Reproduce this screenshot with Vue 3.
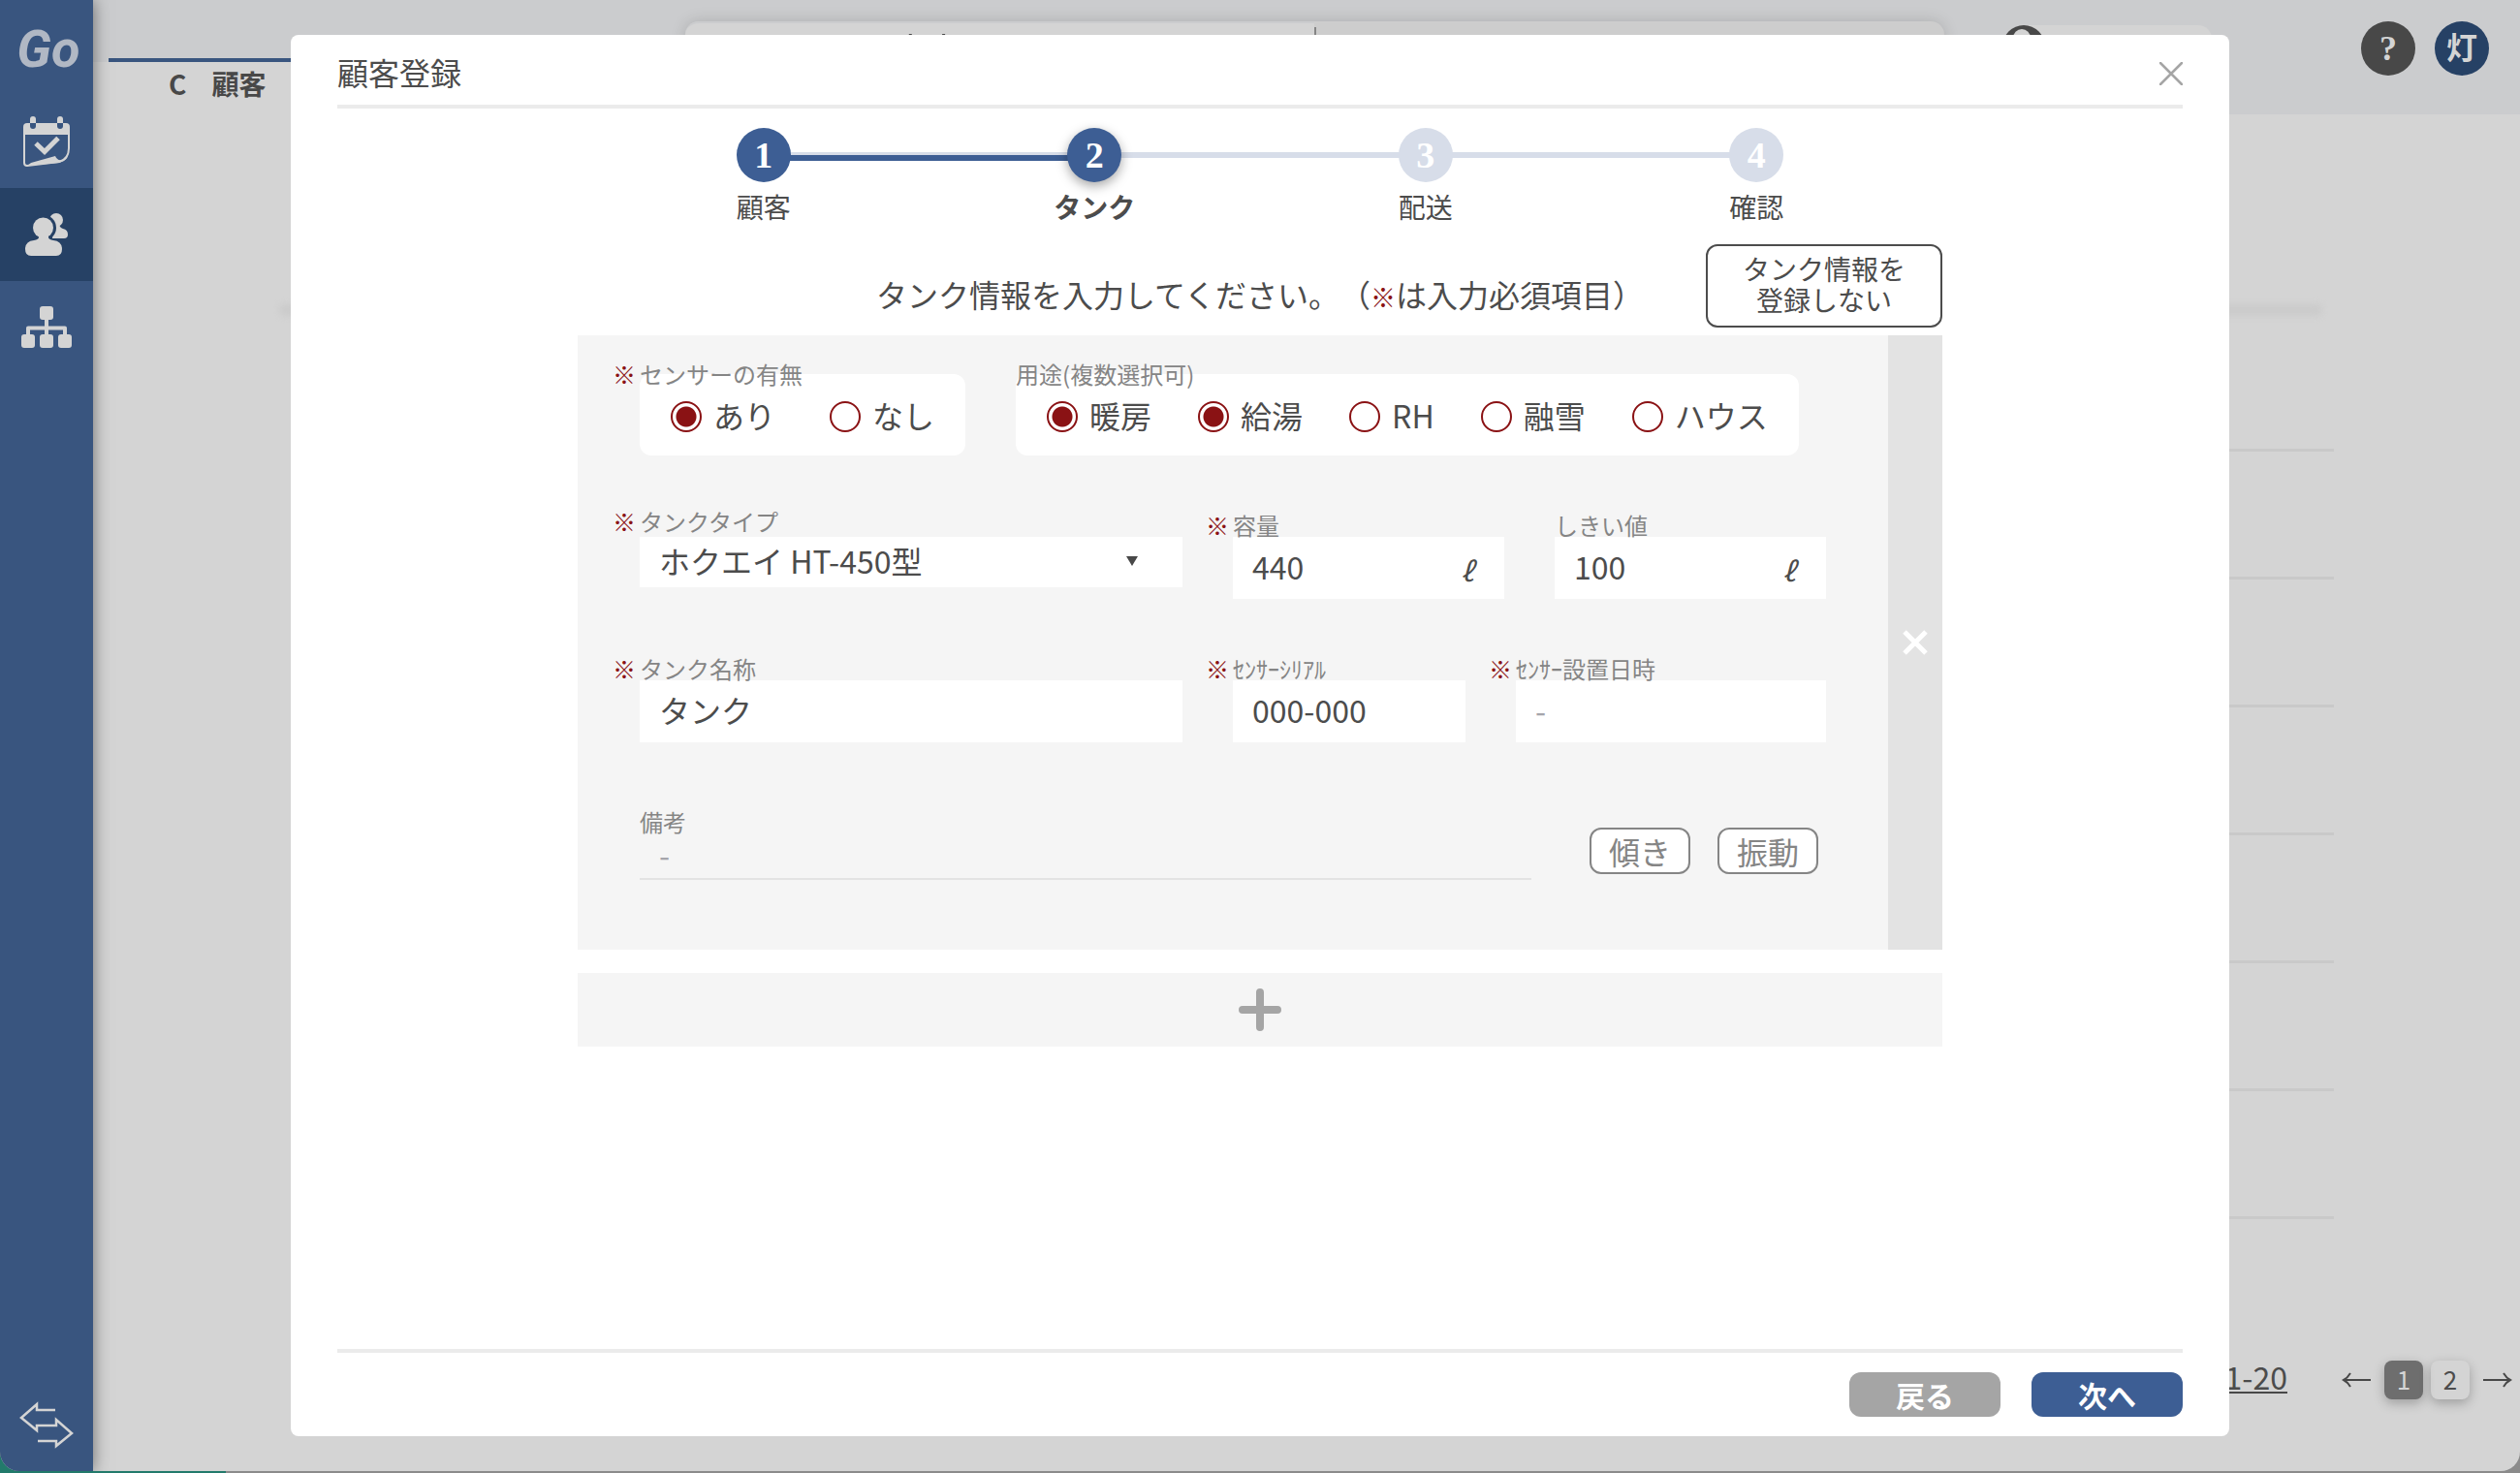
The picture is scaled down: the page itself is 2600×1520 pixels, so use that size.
<script setup>
import { ref } from 'vue'

const steps = [
  { label: '顧客', state: 'done' },
  { label: 'タンク', state: 'current' },
  { label: '配送', state: 'todo' },
  { label: '確認', state: 'todo' },
]
const sensor = ref('あり')
const sensorOptions = ['あり', 'なし']
const usage = ref(['暖房', '給湯'])
const usageOptions = ['暖房', '給湯', 'RH', '融雪', 'ハウス']
const tankType = ref('ホクエイ HT-450型')
const capacity = ref('440')
const threshold = ref('100')
const tankName = ref('タンク')
const serial = ref('000-000')
const installedAt = ref('')
const note = ref('')
</script>

<template>
  <div class="app">
    <nav class="sidebar">
      <a href="#" class="brand">Go</a>
      <a href="#" class="nav-item" aria-label="予定">
        <svg width="48" height="52" viewBox="0 0 48 52">
          <path d="M4 7H44Q48 7 48 11V19H0V11Q0 7 4 7Z" fill="#d4d4d4" />
          <path d="M1 18V48Q1 51 4 51L37 47Q47 44 47 33V18" fill="none" stroke="#d4d4d4" stroke-width="2" />
          <path d="M4 51L8 48L33 41Q35 46 40 45Q45 43 47 35Q47 46 37 48Z" fill="#d4d4d4" />
          <rect x="7" y="0" width="6" height="13" rx="3" fill="#39557f" />
          <rect x="35" y="0" width="6" height="13" rx="3" fill="#39557f" />
          <path d="M7 7V3a3 3 0 0 1 6 0V7ZM35 7V3a3 3 0 0 1 6 0V7Z" fill="#d4d4d4" />
          <path d="M13 28L22 36.500L36 22.500" fill="none" stroke="#d4d4d4" stroke-width="5" />
        </svg>
      </a>
      <a href="#" class="nav-item active" aria-label="顧客">
        <svg width="44" height="44" viewBox="26 220 44 44">
          <g fill="#d4d4d4">
            <circle cx="58" cy="227" r="7" />
            <path d="M55 230H62Q60 234 65 236Q70 237 70 242Q70 246 66 246H54Z" />
          </g>
          <circle cx="44.500" cy="235" r="13.500" fill="#264165" />
          <g fill="#d4d4d4">
            <circle cx="44.500" cy="235" r="10.500" />
            <path d="M40 242H50V245Q50 247 55 248Q64 249 64 257Q64 264 58 264H32Q26 264 26 257Q26 249 35 248Q40 247 40 245Z" />
          </g>
        </svg>
      </a>
      <a href="#" class="nav-item" aria-label="組織">
        <svg width="52" height="44" viewBox="22 316 52 44">
          <path d="M48 328V348M29 348V338.500H67V348" fill="none" stroke="#d4d4d4" stroke-width="4" stroke-linejoin="round" />
          <g fill="#d4d4d4">
            <rect x="41" y="316" width="14" height="14" rx="3" />
            <rect x="22" y="345" width="14" height="14" rx="3" />
            <rect x="41" y="345" width="14" height="14" rx="3" />
            <rect x="60" y="345" width="14" height="14" rx="3" />
          </g>
        </svg>
      </a>
      <a href="#" class="nav-toggle" aria-label="切替">
        <svg width="56" height="50" viewBox="20 1445 56 50">
          <path d="M57 1454H38V1448L22 1462L38 1475V1470H58V1464L74 1478L58 1491V1486H39" fill="none" stroke="#d4d4d4" stroke-width="2.500" />
        </svg>
      </a>
    </nav>

    <main class="page">
      <header class="topbar">
        <h1 class="tab"><span>C</span><span>顧客</span></h1>
        <div class="search">
          <div class="search-main">
            <svg width="240" height="6" viewBox="0 0 240 6">
              <path d="M10 3h3v3h-3zM195 1h3l-2 5h-3zM203 3h3v3h-3zM216 3h3v3h-3zM229 1h3l1 5h-3z" fill="#484848" />
            </svg>
          </div>
          <div class="search-more"></div>
        </div>
        <div class="staff">
          <svg width="44" height="44" viewBox="0 0 44 44">
            <circle cx="22" cy="22" r="22" fill="#484848" />
            <circle cx="20" cy="13" r="9" fill="#d4d4d4" />
          </svg>
        </div>
        <div class="account">
          <button type="button" class="round help">?</button>
          <button type="button" class="round user">灯</button>
        </div>
      </header>
      <section class="list">
        <div class="list-head"></div>
        <div v-for="n in 7" :key="n" class="list-row"></div>
      </section>
      <div class="pager">
        <span class="range">1-20</span>
        <a href="#" aria-label="前へ">
          <svg width="30" height="18" viewBox="0 0 30 18"><path d="M30 9H2M9 2Q6 7 2 9Q6 11 9 16" fill="none" stroke="#484848" stroke-width="2" /></svg>
        </a>
        <button type="button" class="pg on">1</button>
        <button type="button" class="pg">2</button>
        <a href="#" aria-label="次へ">
          <svg width="30" height="18" viewBox="0 0 30 18"><path d="M0 9H28M21 2Q24 7 28 9Q24 11 21 16" fill="none" stroke="#484848" stroke-width="2" /></svg>
        </a>
      </div>
    </main>

    <div class="modal" role="dialog" aria-labelledby="dialog-title">
      <header class="modal-head">
        <h2 id="dialog-title">顧客登録</h2>
        <button type="button" class="close" aria-label="閉じる">
          <svg width="24" height="24" viewBox="0 0 24 24"><path d="M1 1L23 23M23 1L1 23" stroke="#a5a5a5" stroke-width="2.500" stroke-linecap="round" /></svg>
        </button>
      </header>

      <div class="modal-body">
        <ol class="steps">
          <li v-for="(s, i) in steps" :key="s.label" :class="s.state">
            <span class="dot">{{ i + 1 }}</span>
            <span class="step-label">{{ s.label }}</span>
          </li>
        </ol>

        <div class="wizard">
          <div class="intro">
            <p>タンク情報を入力してください。（<span class="mark">※</span>は入力必須項目）</p>
            <button type="button" class="skip">タンク情報を<br />登録しない</button>
          </div>

          <div class="card">
            <form class="form">
              <div class="row row-choice">
                <div role="group" aria-labelledby="sensor-label">
                  <span id="sensor-label" class="label over"><i>※</i>センサーの有無</span>
                  <div class="choices wide">
                    <label v-for="o in sensorOptions" :key="o">
                      <input v-model="sensor" type="radio" name="sensor" :value="o" /><span>{{ o }}</span>
                    </label>
                  </div>
                </div>
                <div role="group" aria-labelledby="usage-label">
                  <span id="usage-label" class="label over">用途(複数選択可)</span>
                  <div class="choices">
                    <label v-for="o in usageOptions" :key="o">
                      <input v-model="usage" type="checkbox" :value="o" /><span>{{ o }}</span>
                    </label>
                  </div>
                </div>
              </div>

              <div class="row row-spec">
                <div>
                  <label class="label raised" for="type"><i>※</i>タンクタイプ</label>
                  <div class="select">
                    <select id="type" v-model="tankType">
                      <option>ホクエイ HT-450型</option>
                    </select>
                    <svg width="12" height="10" viewBox="0 0 12 10"><path d="M0 0H12L6 10Z" fill="#484848" /></svg>
                  </div>
                </div>
                <div>
                  <label class="label lowered" for="capacity"><i>※</i>容量</label>
                  <div class="field"><input id="capacity" v-model="capacity" type="text" /><span>ℓ</span></div>
                </div>
                <div>
                  <label class="label lowered" for="threshold">しきい値</label>
                  <div class="field"><input id="threshold" v-model="threshold" type="text" /><span>ℓ</span></div>
                </div>
              </div>

              <div class="row row-name">
                <div>
                  <label class="label" for="name"><i>※</i>タンク名称</label>
                  <div class="field"><input id="name" v-model="tankName" type="text" /></div>
                </div>
                <div>
                  <label class="label" for="serial"><i>※</i>ｾﾝｻｰｼﾘｱﾙ</label>
                  <div class="field"><input id="serial" v-model="serial" type="text" /></div>
                </div>
                <div>
                  <label class="label" for="installed"><i>※</i>ｾﾝｻｰ設置日時</label>
                  <div class="field"><input id="installed" v-model="installedAt" type="text" placeholder="-" /></div>
                </div>
              </div>

              <div class="row row-note">
                <div class="note">
                  <label class="label" for="note">備考</label>
                  <input id="note" v-model="note" type="text" placeholder="-" />
                </div>
                <div class="toggles">
                  <button type="button">傾き</button>
                  <button type="button">振動</button>
                </div>
              </div>
            </form>
            <button type="button" class="remove" aria-label="削除">
              <svg width="26" height="26" viewBox="0 0 26 26"><path d="M2 2L24 24M24 2L2 24" stroke="#fff" stroke-width="5" /></svg>
            </button>
          </div>

          <button type="button" class="add" aria-label="タンクを追加">
            <svg width="44" height="44" viewBox="0 0 44 44"><path d="M22 4V40M4 22H40" stroke="#a5a5a5" stroke-width="8" stroke-linecap="round" /></svg>
          </button>
        </div>
      </div>

      <footer class="modal-foot">
        <button type="button" class="back">戻る</button>
        <button type="button" class="next">次へ</button>
      </footer>
    </div>
  </div>
</template>

<style>
html {
  background: linear-gradient(to right, #227a6b 233px, #8b8b8b 233px);
  min-height: 100%;
}
</style>

<style scoped>
* {
  box-sizing: border-box;
}
.app {
  position: relative;
  display: flex;
  min-height: calc(100vh - 2px);
  border-radius: 0 0 20px 20px;
  overflow: hidden;
  background: #d4d4d4;
  color: #4c4c4c;
  font-family: "Noto Sans CJK JP", sans-serif;
  font-size: 32px;
}
a {
  color: inherit;
  text-decoration: none;
}
button,
input,
select {
  margin: 0;
  padding: 0;
  border: 0;
  color: inherit;
  font: inherit;
}
button {
  display: flex;
  align-items: center;
  justify-content: center;
  background: none;
}
svg {
  display: block;
}

.sidebar {
  display: flex;
  flex-direction: column;
  flex: none;
  width: 96px;
  background: #39557f;
  box-shadow: 0 0 16px rgba(0, 0, 0, 0.5);
  z-index: 1;
}
.brand {
  height: 98px;
  padding-left: 4px;
  color: #b1b8c4;
  font: italic bold 54px/102px Roboto, sans-serif;
  text-align: center;
}
.nav-item {
  display: flex;
  align-items: center;
  justify-content: center;
  height: 96px;
}
.nav-item.active {
  background: #264165;
}
.nav-toggle {
  display: flex;
  justify-content: center;
  margin-top: auto;
  padding-bottom: 22px;
}

.page {
  display: flex;
  flex: 1;
  flex-direction: column;
}
.topbar {
  display: flex;
  align-items: flex-start;
  height: 118px;
  padding-left: 16px;
  background: #cbccce;
}
.tab {
  display: flex;
  gap: 26px;
  width: 560px;
  height: 58px;
  margin: 60px 0 0;
  padding-left: 62px;
  border-top: 4px solid #39557f;
  background: #d4d4d4;
  box-shadow: -16px 4px 0 #d4d4d4;
  color: #484848;
  font-size: 28px;
  line-height: 44px;
}
.search {
  display: flex;
  flex: 1;
  height: 64px;
  margin: 22px 60px 0 35px;
  border-radius: 14px;
  background: #cdcdcd;
  box-shadow: 0 0 16px rgba(0, 0, 0, 0.15);
}
.search-main {
  flex: 1;
  border-top: 2px solid #cbccce;
  border-radius: 14px 0 0 14px;
  background: #d4d4d4;
}
.search-main svg {
  margin: 10px 0 0 36px;
}
.search-more {
  flex: 1;
  margin-top: 6px;
  border-left: 2px solid #858585;
}
.staff {
  width: 216px;
  height: 44px;
  margin-top: 26px;
  border-radius: 22px 14px 14px 22px;
  background: #d4d4d4;
}
.account {
  display: flex;
  gap: 20px;
  margin: 22px 32px 0 154px;
}
.round {
  width: 56px;
  height: 56px;
  border-radius: 50%;
  color: #d4d4d4;
  font: bold 36px/56px "Liberation Serif", "Noto Sans CJK JP", serif;
}
.help {
  background: #484848;
}
.user {
  background: #264165;
  font-size: 32px;
}
.list {
  margin: 196px 192px 0;
}
.list-head {
  height: 12px;
  margin: 0 12px 0 0;
  border-radius: 6px;
  background: #cbcbcb;
  filter: blur(3px);
}
.list-row {
  height: 132px;
  margin-left: 20px;
  border-bottom: 3px solid #c9c9c9;
}
.list-head + .list-row {
  height: 140px;
}
.pager {
  display: flex;
  align-items: center;
  justify-content: flex-end;
  margin: auto 8px 74px 0;
}
.range {
  margin: 0 56px 6px 0;
  border-bottom: 2px solid #484848;
  line-height: 32px;
}
.pg {
  width: 40px;
  height: 40px;
  margin-left: 14px;
  padding-bottom: 2px;
  border-radius: 8px;
  box-shadow: 0 4px 12px rgba(0, 0, 0, 0.25);
  font-size: 26px;
  line-height: 36px;
}
.pg + .pg {
  margin: 0 14px 0 8px;
}
.pg.on {
  background: #6e6e6e;
  color: #d4d4d4;
}

.modal {
  position: absolute;
  inset: 36px 300px;
  display: flex;
  flex-direction: column;
  border-radius: 8px;
  background: #fff;
  z-index: 2;
}
.modal-head {
  display: flex;
  align-items: center;
  justify-content: space-between;
  height: 76px;
  margin: 0 48px;
  border-bottom: 4px solid #ebebeb;
}
.modal-head h2 {
  margin: 0;
  padding-top: 4px;
  font-size: 32px;
  font-weight: 400;
  line-height: 48px;
}
.close {
  margin-top: 8px;
}
.modal-body {
  flex: 1;
  padding: 20px 24px;
}
.steps {
  display: grid;
  grid-template-columns: repeat(4, 1fr);
  max-width: 1366px;
  margin: 0 auto;
  padding: 0;
  list-style: none;
}
.steps li {
  position: relative;
  display: flex;
  flex-direction: column;
  align-items: center;
  gap: 8px;
}
.steps li + li::before,
.steps li.current::after {
  content: "";
  position: absolute;
  top: 25px;
  right: 50%;
  width: 100%;
  height: 6px;
  background: #d7dde9;
}
.steps li.current::after {
  top: 28px;
  background: #3d5e94;
}
.dot {
  position: relative;
  width: 56px;
  height: 56px;
  border-radius: 50%;
  background: #d7dde9;
  color: #fff;
  font: bold 38px/56px "Liberation Serif", serif;
  text-align: center;
  z-index: 2;
}
.done .dot,
.current .dot {
  background: #3d5e94;
}
.current .dot {
  box-shadow: 0 4px 12px rgba(0, 0, 0, 0.35);
}
.steps li:first-child {
  z-index: 3;
}
.step-label {
  font-size: 28px;
  line-height: 34px;
}
.current .step-label {
  font-weight: 700;
}

.wizard {
  max-width: 1408px;
  margin: 22px auto 0;
}
.intro {
  display: grid;
  grid-template-columns: 244px 1fr 244px;
  align-items: end;
}
.intro p {
  grid-column: 2;
  margin: 0;
  line-height: 64px;
  text-align: center;
  white-space: nowrap;
  text-spacing-trim: space-all;
}
.mark {
  color: #8a1214;
  font-size: 26px;
}
.skip {
  height: 86px;
  border: 2px solid #4c4c4c;
  border-radius: 12px;
  font-size: 28px;
  line-height: 32px;
  padding-bottom: 4px;
}
.card {
  display: flex;
  margin-top: 8px;
  background: #f5f5f5;
}
.form {
  flex: 1;
  padding: 28px 64px 72px;
}
.remove {
  width: 56px;
  background: #e3e3e3;
}
.row {
  display: grid;
  column-gap: 52px;
}
.row-choice {
  grid-template-columns: auto auto;
  justify-content: start;
}
.row-spec {
  grid-template-columns: 560fr 280fr 280fr;
  margin-top: 56px;
}
.row-name {
  grid-template-columns: 560fr 240fr 320fr;
  margin-top: 60px;
}
.row-note {
  grid-template-columns: 1fr auto;
  column-gap: 60px;
  align-items: end;
  margin-top: 70px;
}
.label {
  display: flex;
  gap: 4px;
  color: #858585;
  font-size: 24px;
  line-height: 24px;
}
.label i {
  width: 24px;
  margin-left: -28px;
  color: #8a1214;
  font-style: normal;
}
.label.over {
  position: relative;
  margin-bottom: -12px;
}
.label.raised {
  margin-bottom: 4px;
}
.label.lowered {
  margin-top: 4px;
}
.choices {
  display: flex;
  gap: 48px;
  height: 84px;
  padding: 4px 32px 0;
  border-radius: 12px;
  background: #fff;
}
.choices.wide {
  gap: 56px;
}
.choices label {
  display: flex;
  align-items: center;
  gap: 12px;
}
.choices span {
  padding-bottom: 4px;
}
.choices input {
  appearance: none;
  width: 32px;
  height: 32px;
  border: 2px solid #8a1214;
  border-radius: 50%;
}
.choices input:checked {
  background: radial-gradient(circle, #8a1214 10px, #fff 11px);
}
.select {
  position: relative;
}
.select select {
  display: block;
  appearance: none;
  width: 100%;
  height: 52px;
  padding: 0 60px 4px 20px;
  border-radius: 0;
  background: #fff;
}
.select svg {
  position: absolute;
  top: 20px;
  right: 46px;
  pointer-events: none;
}
.field {
  display: flex;
  align-items: center;
  height: 64px;
  padding: 0 20px 4px;
  background: #fff;
}
.field input {
  flex: 1;
  min-width: 0;
  width: 100%;
  height: 48px;
  background: none;
}
.field span {
  padding: 8px 12px 0 0;
  font-size: 28px;
  font-style: italic;
}
input::placeholder {
  color: #a5a5ab;
  opacity: 1;
}
.note input {
  display: block;
  width: 100%;
  height: 48px;
  padding: 0 20px 4px;
  border-bottom: 2px solid #e3e3e3;
  background: none;
}
.toggles {
  display: flex;
  gap: 28px;
  margin: 0 8px 6px 0;
}
.toggles button {
  width: 104px;
  height: 48px;
  border: 2px solid #858585;
  border-radius: 12px;
  background: #fff;
  color: #858585;
  line-height: 40px;
}
.add {
  width: 100%;
  height: 76px;
  margin-top: 24px;
  background: #f5f5f5;
}
.modal-foot {
  display: flex;
  justify-content: flex-end;
  gap: 32px;
  margin: 0 48px;
  padding: 20px 0;
  border-top: 4px solid #ebebeb;
}
.modal-foot button {
  width: 156px;
  height: 46px;
  border-radius: 12px;
  color: #fff;
  font-size: 30px;
  font-weight: 700;
  line-height: 42px;
}
.back {
  background: #a5a5a5;
}
.next {
  background: #3d5e94;
}
</style>
